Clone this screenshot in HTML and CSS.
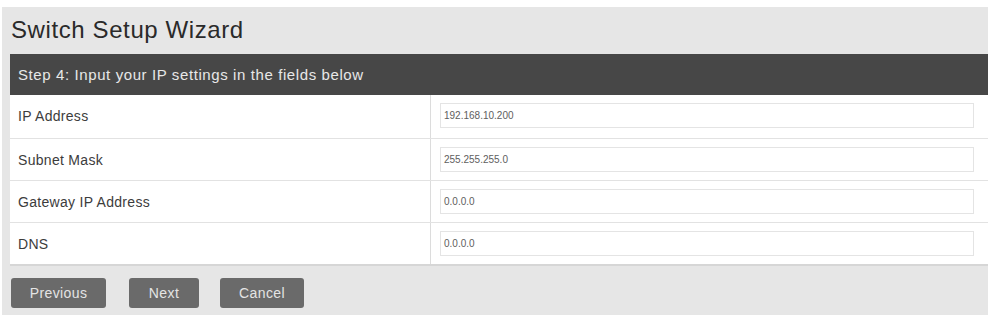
FILE: index.html
```html
<!DOCTYPE html>
<html>
<head>
<meta charset="utf-8">
<link rel="stylesheet" href="styles.css">
</head>
<body>
<div class="panel">
  <h1 class="title">Switch Setup Wizard</h1>
  <div class="step">Step 4: Input your IP settings in the fields below</div>
  <div class="table">
    <div class="row">
      <div class="label">IP Address</div>
      <div class="value"><div class="field">192.168.10.200</div></div>
    </div>
    <div class="row">
      <div class="label">Subnet Mask</div>
      <div class="value"><div class="field">255.255.255.0</div></div>
    </div>
    <div class="row">
      <div class="label">Gateway IP Address</div>
      <div class="value"><div class="field">0.0.0.0</div></div>
    </div>
    <div class="row">
      <div class="label">DNS</div>
      <div class="value"><div class="field">0.0.0.0</div></div>
    </div>
  </div>
  <div class="actions">
    <button class="btn btn-prev">Previous</button>
    <button class="btn btn-next">Next</button>
    <button class="btn btn-cancel">Cancel</button>
  </div>
</div>
</body>
</html>
```
FILE: styles.css
```css
html, body {
  margin: 0;
  padding: 0;
  background: #ffffff;
  font-family: "Liberation Sans", Arial, sans-serif;
}
.panel {
  margin: 7px 0 0 2px;
  width: 978px;
  height: 308px;
  padding-left: 8px;
  background: #e6e6e6;
}
.title {
  margin: 0;
  height: 47px;
  box-sizing: border-box;
  padding: 9px 0 0 1px;
  font-size: 24px;
  font-weight: normal;
  color: #2a2a2a;
  letter-spacing: 0.6px;
}
.step {
  height: 41px;
  box-sizing: border-box;
  padding: 12px 0 0 8px;
  background: #474747;
  color: #e8e8e8;
  font-size: 15px;
  letter-spacing: 0.6px;
}
.table {
  background: #ffffff;
  border-bottom: 2px solid #d6d6d6;
}
.row {
  display: flex;
  height: 42px;
  box-sizing: border-box;
  border-top: 1px solid #e2e2e2;
}
.row:first-child {
  border-top: none;
  height: 43px;
}
.label {
  width: 421px;
  box-sizing: border-box;
  border-right: 1px solid #dcdcdc;
  padding: 13px 0 0 8px;
  font-size: 14px;
  color: #3c3c3c;
  letter-spacing: 0.3px;
}
.value {
  flex: 1;
  padding: 8px 0 0 9px;
}
.field {
  width: 534px;
  height: 25px;
  box-sizing: border-box;
  border: 1px solid #e4e4e4;
  padding: 6px 0 0 3px;
  font-size: 10px;
  color: #5e5e5e;
}
.actions {
  display: flex;
  padding-top: 12px;
  padding-left: 1px;
}
.btn {
  height: 30px;
  border: none;
  border-radius: 3px;
  background: #6a6a6a;
  color: #e4e4e4;
  font-family: "Liberation Sans", Arial, sans-serif;
  font-size: 14px;
  letter-spacing: 0.4px;
  padding: 0;
}
.btn-prev { width: 95px; }
.btn-next { width: 70px; margin-left: 23px; }
.btn-cancel { width: 84px; margin-left: 21px; }
```
